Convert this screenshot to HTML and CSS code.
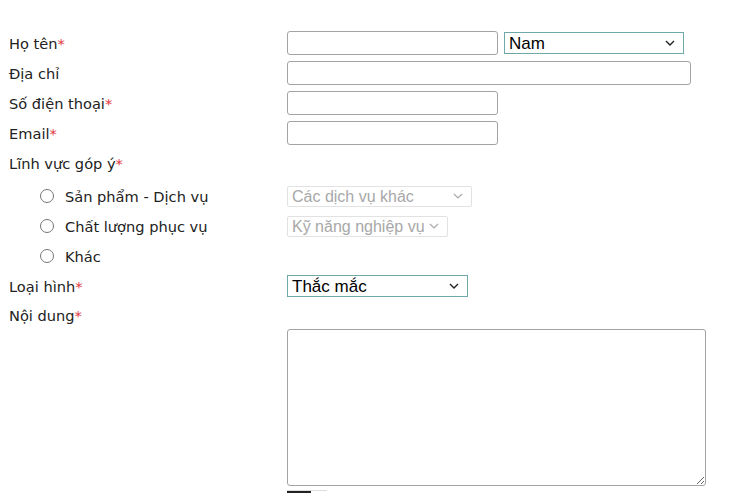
FILE: index.html
```html
<!DOCTYPE html>
<html lang="vi">
<head>
<meta charset="UTF-8" />
<meta name="viewport" content="width=device-width, initial-scale=1" />
<title>Góp ý</title>
<link rel="stylesheet" href="styles.css">
</head>
<body>

<form class="feedback">
  <div class="row">
    <label class="lbl">Họ tên<span class="req">*</span></label>
    <div class="ctrl">
      <input type="text" class="txt short" />
      <select class="sel focus gender">
        <option>Nam</option>
        <option>Nữ</option>
      </select>
    </div>
  </div>

  <div class="row">
    <label class="lbl">Địa chỉ</label>
    <div class="ctrl"><input type="text" class="txt long" /></div>
  </div>

  <div class="row">
    <label class="lbl">Số điện thoại<span class="req">*</span></label>
    <div class="ctrl"><input type="text" class="txt short" /></div>
  </div>

  <div class="row">
    <label class="lbl">Email<span class="req">*</span></label>
    <div class="ctrl"><input type="text" class="txt short" /></div>
  </div>

  <div class="row group">
    <label class="lbl">Lĩnh vực góp ý<span class="req">*</span></label>
  </div>

  <!-- các lựa chọn lĩnh vực -->
  <div class="row opt">
    <label class="lbl radio"><input type="radio" name="field" /> Sản phẩm - Dịch vụ</label>
    <div class="ctrl">
      <select class="sel off w1" disabled><option>Các dịch vụ khác</option></select>
    </div>
  </div>

  <div class="row opt">
    <label class="lbl radio"><input type="radio" name="field" /> Chất lượng phục vụ</label>
    <div class="ctrl">
      <select class="sel off w2" disabled><option>Kỹ năng nghiệp vụ</option></select>
    </div>
  </div>

  <div class="row opt">
    <label class="lbl radio"><input type="radio" name="field" /> Khác</label>
  </div>

  <div class="row">
    <label class="lbl">Loại hình<span class="req">*</span></label>
    <div class="ctrl">
      <select class="sel focus type">
        <option>Thắc mắc</option>
        <option>Góp ý</option>
        <option>Khiếu nại</option>
      </select>
    </div>
  </div>

  <div class="row last">
    <label class="lbl">Nội dung<span class="req">*</span></label>
  </div>

  <div class="row area">
    <div class="lbl"></div>
    <div class="ctrl">
      <textarea class="content"></textarea>
      <div class="cut"><span></span></div>
    </div>
  </div>
</form>

</body>
</html>
```

FILE: styles.css
```css
body {
  margin: 0;
  padding: 28px 0 0 9px;
  background: #fff;
  color: #222;
  font-family: "DejaVu Sans", Verdana, sans-serif;
  font-size: 14.6px;
  overflow: hidden;
}
.feedback {
  display: flex;
  flex-direction: column;
}
.row {
  display: flex;
  align-items: center;
  height: 30px;
}
.row.group {
  height: 33px;
  padding-bottom: 3px;
  box-sizing: border-box;
}
.row.last {
  height: 28px;
}
.row.area {
  height: auto;
  align-items: flex-start;
}
.lbl {
  width: 278px;
  flex-shrink: 0;
}
.req {
  color: #e0353b;
}
.ctrl {
  display: flex;
  align-items: center;
  gap: 6px;
}
.radio {
  display: flex;
  align-items: center;
  padding-left: 26px;
  box-sizing: border-box;
}
.radio input {
  width: 14px;
  height: 14px;
  margin: 0 11px 0 5px;
}
.txt {
  box-sizing: border-box;
  height: 24px;
  border: 1px solid #a3a3a3;
  border-radius: 3px;
  padding: 2px 4px;
  font-size: 15px;
}
.txt.short { width: 211px; }
.txt.long { width: 404px; }

.sel {
  box-sizing: border-box;
  appearance: none;
  -webkit-appearance: none;
  font-family: "Liberation Sans", Arial, sans-serif;
  background: #fff url("data:image/svg+xml,%3Csvg xmlns='http://www.w3.org/2000/svg' width='10' height='6' viewBox='0 0 10 6'%3E%3Cpath d='M1 1l4 4 4-4' fill='none' stroke='%23222' stroke-width='1.4'/%3E%3C/svg%3E") no-repeat right 8px center;
  border-radius: 0;
  padding: 0 0 0 4px;
}
.sel.focus {
  height: 22px;
  border: 1px solid #6fa8a8;
  font-size: 17px;
  color: #000;
}
.gender { width: 180px; }
.type { width: 181px; }
.sel.off {
  height: 21px;
  border: 1px solid #e2e2e2;
  border-radius: 2px;
  font-size: 16px;
  color: #a8a8a8;
  opacity: 1;
  background-image: url("data:image/svg+xml,%3Csvg xmlns='http://www.w3.org/2000/svg' width='10' height='6' viewBox='0 0 10 6'%3E%3Cpath d='M1 1l4 4 4-4' fill='none' stroke='%23aaa' stroke-width='1.2'/%3E%3C/svg%3E");
}
.w1 { width: 185px; }
.w2 { width: 161px; }

.ctrl:has(.content) {
  flex-direction: column;
  align-items: flex-start;
  gap: 4px;
}
.content {
  box-sizing: border-box;
  width: 419px;
  height: 157px;
  border: 1px solid #a3a3a3;
  border-radius: 3px;
  margin: 0;
  resize: both;
}
.cut {
  width: 40px;
  border-top: 1px solid #ddd;
}
.cut span {
  display: block;
  width: 24px;
  height: 2px;
  background: #222;
}
```
